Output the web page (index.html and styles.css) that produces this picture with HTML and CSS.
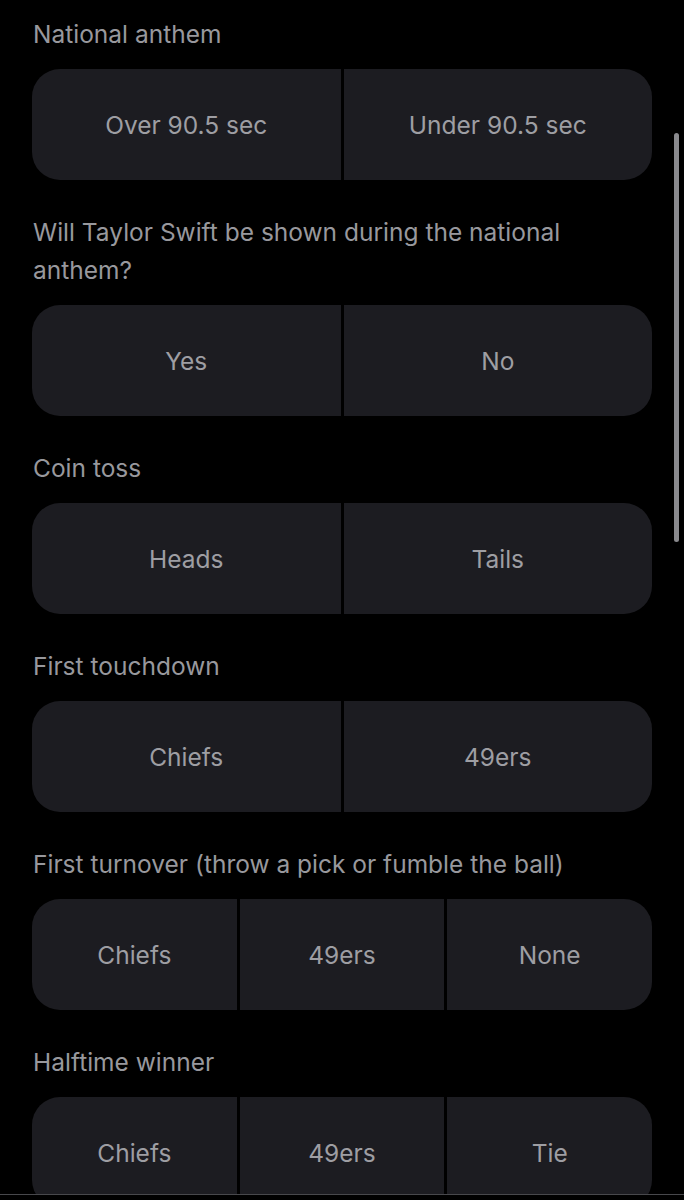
FILE: index.html
```html
<!DOCTYPE html>
<html lang="en">
<head>
<meta charset="utf-8">
<title>Picks</title>
<link rel="stylesheet" href="styles.css">
</head>
<body>
<main class="list">
  <section class="question">
    <div class="label">National anthem</div>
    <div class="options">
      <div class="option">Over 90.5 sec</div>
      <div class="option">Under 90.5 sec</div>
    </div>
  </section>
  <section class="question">
    <div class="label">Will Taylor Swift be shown during the national anthem?</div>
    <div class="options">
      <div class="option">Yes</div>
      <div class="option">No</div>
    </div>
  </section>
  <section class="question">
    <div class="label">Coin toss</div>
    <div class="options">
      <div class="option">Heads</div>
      <div class="option">Tails</div>
    </div>
  </section>
  <section class="question">
    <div class="label">First touchdown</div>
    <div class="options">
      <div class="option">Chiefs</div>
      <div class="option">49ers</div>
    </div>
  </section>
  <section class="question">
    <div class="label">First turnover (throw a pick or fumble the ball)</div>
    <div class="options">
      <div class="option">Chiefs</div>
      <div class="option">49ers</div>
      <div class="option">None</div>
    </div>
  </section>
  <section class="question">
    <div class="label">Halftime winner</div>
    <div class="options">
      <div class="option">Chiefs</div>
      <div class="option">49ers</div>
      <div class="option">Tie</div>
    </div>
  </section>
</main>
<div class="scrollbar"></div>
<div class="bottom-bar"></div>
</body>
</html>
```

FILE: styles.css
```css
html, body {
  margin: 0;
  padding: 0;
  background: #000;
  height: 100%;
  overflow: hidden;
}

body {
  font-family: Inter, "Noto Sans", "Liberation Sans", sans-serif;
  color: #9a9a9f;
}

.list {
  padding: 15px 32px 0 32px;
  display: flex;
  flex-direction: column;
  gap: 33px;
}

.question {
  display: flex;
  flex-direction: column;
  gap: 16px;
}

.label {
  font-size: 24.5px;
  line-height: 38px;
  padding-left: 1px;
  padding-right: 70px;
  color: #98989d;
}

.options {
  display: flex;
  gap: 3px;
  height: 111px;
}

.option {
  flex: 1;
  display: flex;
  align-items: center;
  justify-content: center;
  background: #1c1c21;
  font-size: 24.5px;
  color: #9e9ea3;
}

.option:first-child {
  border-radius: 28px 0 0 28px;
}

.option:last-child {
  border-radius: 0 28px 28px 0;
}

.scrollbar {
  position: fixed;
  left: 674px;
  top: 133px;
  width: 5px;
  height: 409px;
  border-radius: 3px;
  background: #8a8a8e;
}

.bottom-bar {
  position: fixed;
  left: 0;
  right: 0;
  bottom: 0;
  height: 5px;
  background: #000;
  border-top: 1px solid #48484c;
}
```
